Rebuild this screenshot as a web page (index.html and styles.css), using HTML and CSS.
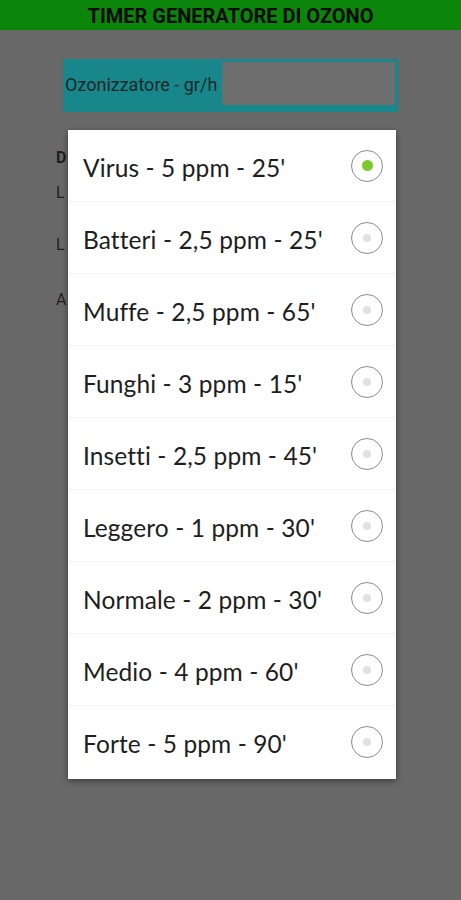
FILE: index.html
```html
<!DOCTYPE html>
<html lang="it">
<head>
<meta charset="utf-8">
<title>Timer generatore di ozono</title>
<link rel="stylesheet" href="styles.css">
</head>
<body>
<div class="app">
  <header class="topbar">TIMER GENERATORE DI OZONO</header>
  <div class="content">
    <div class="ozon">
      <span class="ozon-label">Ozonizzatore - gr/h</span>
      <div class="ozon-input"></div>
    </div>
    <div class="behind">
      <div class="b-row b-bold">D</div>
      <div class="b-row b-l1">L</div>
      <div class="b-row b-l2">L</div>
      <div class="b-row b-a">A</div>
    </div>
  </div>
</div>
<div class="dialog">
  <div class="opt"><span class="opt-text">Virus - 5 ppm - 25'</span><span class="radio on"></span></div>
  <div class="opt"><span class="opt-text">Batteri - 2,5 ppm - 25'</span><span class="radio"></span></div>
  <div class="opt"><span class="opt-text">Muffe - 2,5 ppm - 65'</span><span class="radio"></span></div>
  <div class="opt"><span class="opt-text">Funghi - 3 ppm - 15'</span><span class="radio"></span></div>
  <div class="opt"><span class="opt-text">Insetti - 2,5 ppm - 45'</span><span class="radio"></span></div>
  <div class="opt"><span class="opt-text">Leggero - 1 ppm - 30'</span><span class="radio"></span></div>
  <div class="opt"><span class="opt-text">Normale - 2 ppm - 30'</span><span class="radio"></span></div>
  <div class="opt"><span class="opt-text">Medio - 4 ppm - 60'</span><span class="radio"></span></div>
  <div class="opt"><span class="opt-text">Forte - 5 ppm - 90'</span><span class="radio"></span></div>
</div>
</body>
</html>
```
FILE: styles.css
```css
html, body {
  margin: 0;
  padding: 0;
}
body {
  width: 461px;
  height: 900px;
  background: #686868;
  font-family: Roboto, "Liberation Sans", sans-serif;
  overflow: hidden;
}
.app {
  display: flex;
  flex-direction: column;
}
.topbar {
  height: 30px;
  background: #0b860b;
  color: #0a0a0a;
  font-weight: bold;
  font-size: 20px;
  display: flex;
  align-items: center;
  justify-content: center;
  padding-top: 1px;
  box-sizing: border-box;
}
.content {
  padding: 29px 63px 0 63px;
  display: flex;
  flex-direction: column;
}
.ozon {
  width: 335px;
  height: 53px;
  background: #17878b;
  display: flex;
  align-items: flex-start;
  box-sizing: border-box;
  padding: 3px 3px 7px 0;
}
.ozon-label {
  align-self: center;
  padding-left: 2px;
  font-size: 18px;
  color: #1c2828;
  width: 157px;
  margin-top: 2px;
  white-space: nowrap;
}
.ozon-input {
  flex: 1;
  height: 43px;
  background: #6e6e6e;
}
.behind {
  display: flex;
  flex-direction: column;
  margin-left: -7px;
  font-size: 16px;
  color: #1e1e1e;
}
.b-row { height: 18px; }
.b-bold { font-weight: bold; margin-top: 36px; }
.b-l1 { margin-top: 17px; }
.b-l2 { margin-top: 34px; }
.b-a { margin-top: 37px; }

.dialog {
  position: absolute;
  left: 68px;
  top: 130px;
  width: 328px;
  background: #ffffff;
  box-shadow: 0 2px 6px rgba(0,0,0,0.45);
  display: flex;
  flex-direction: column;
  padding-bottom: 1px;
}
.opt {
  height: 72px;
  display: flex;
  align-items: center;
  justify-content: space-between;
  padding: 0 14px 0 15px;
  border-bottom: 1px solid #f3f3f3;
  box-sizing: border-box;
}
.opt:last-child { border-bottom: none; }
.opt-text {
  font-family: Lato, "Open Sans", sans-serif;
  font-size: 24.5px;
  color: #1e1e1e;
  letter-spacing: 0.1px;
  padding-top: 3px;
}
.radio {
  width: 30px;
  height: 30px;
  border: 1.5px solid #8c8c8c;
  border-radius: 50%;
  display: flex;
  align-items: center;
  justify-content: center;
  box-sizing: content-box;
  margin-right: -1px;
}
.radio::after {
  content: "";
  width: 8px;
  height: 8px;
  border-radius: 50%;
  background: #e0e0e0;
}
.radio.on::after {
  width: 11px;
  height: 11px;
  background: #7cc92c;
}
```
